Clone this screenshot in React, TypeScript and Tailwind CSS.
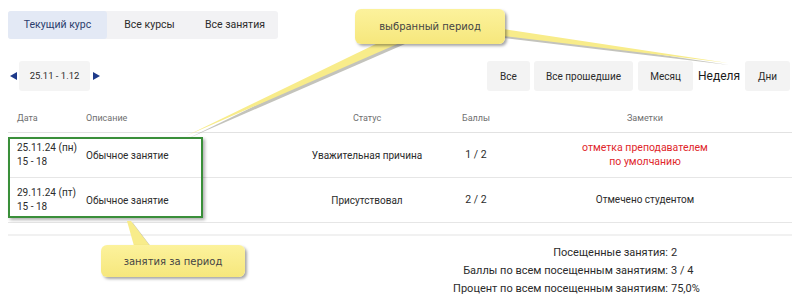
import React from 'react';

const rows = [
  {
    date: '25.11.24 (пн)',
    time: '15 - 18',
    desc: 'Обычное занятие',
    status: 'Уважительная причина',
    score: '1 / 2',
    note: ['отметка преподавателем', 'по умолчанию'],
    red: true,
  },
  {
    date: '29.11.24 (пт)',
    time: '15 - 18',
    desc: 'Обычное занятие',
    status: 'Присутствовал',
    score: '2 / 2',
    note: ['Отмечено студентом'],
    red: false,
  },
];

const summary = [
  ['Посещенные занятия:', '2'],
  ['Баллы по всем посещенным занятиям:', '3 / 4'],
  ['Процент по всем посещенным занятиям:', '75,0%'],
];

const App: React.FC = () => {
  return (
    <div className="relative w-[800px] h-[303px] overflow-hidden bg-white px-2 font-['Roboto',sans-serif] text-[#2b2b2b]">
      {/* Tabs */}
      <div className="pt-[11px]">
        <div className="inline-flex h-[28px] rounded-[3px] bg-[#f2f2f4] text-[10.5px]">
          <div className="w-[99px] flex items-center justify-center rounded-[3px] bg-[#e3e9f5] text-[#2b3d6c]">Текущий курс</div>
          <div className="w-[85px] flex items-center justify-center">Все курсы</div>
          <div className="w-[86px] flex items-center justify-center">Все занятия</div>
        </div>
      </div>

      {/* Period row */}
      <div className="mt-[22px] h-[30px] flex items-center justify-between">
        <div className="flex items-center pl-[2px]">
          <div className="w-0 h-0 border-y-[4px] border-y-transparent border-r-[7px] border-r-[#1e3a8a]" />
          <div className="ml-[2px] w-[71px] h-[30px] flex items-center justify-center rounded-[3px] bg-[#f4f4f4] text-[9.5px]">25.11 - 1.12</div>
          <div className="ml-[3px] w-0 h-0 border-y-[4px] border-y-transparent border-l-[7px] border-l-[#1e3a8a]" />
        </div>
        <div className="flex items-center text-[10px] pr-[2px]">
          <div className="w-[43px] h-[30px] flex items-center justify-center rounded-[3px] bg-[#f3f3f3]">Все</div>
          <div className="ml-[4px] w-[99px] h-[30px] flex items-center justify-center rounded-[3px] bg-[#f3f3f3]">Все прошедшие</div>
          <div className="ml-[5px] w-[55px] h-[30px] flex items-center justify-center rounded-[3px] bg-[#f3f3f3]">Месяц</div>
          <div className="w-[52px] h-[30px] flex items-center justify-center text-[12px] text-[#1a1a1a]">Неделя</div>
          <div className="w-[45px] h-[30px] flex items-center justify-center rounded-[3px] bg-[#f3f3f3]">Дни</div>
        </div>
      </div>

      {/* Table */}
      <div className="mt-[19px]">
        <div className="grid grid-cols-[78px_202px_158px_60px_1fr] border-b border-[#e2e2e2] pt-[3px] pb-[9px] text-[9px] leading-[10px] text-[#6f6f6f]">
          <div className="pl-[9px]">Дата</div>
          <div>Описание</div>
          <div className="text-center">Статус</div>
          <div className="text-center">Баллы</div>
          <div className="text-center pr-[8px]">Заметки</div>
        </div>
        {rows.map((r) => (
          <div key={r.date} className="grid grid-cols-[78px_202px_158px_60px_1fr] h-[45px] items-center border-b border-[#e6e6e6] text-[10px]">
            <div className="pl-[9px] leading-[14px]">
              <div>{r.date}</div>
              <div>{r.time}</div>
            </div>
            <div>{r.desc}</div>
            <div className="text-center">{r.status}</div>
            <div className="text-center text-[10.5px]">{r.score}</div>
            <div className={`text-center pr-[8px] leading-[14px] ${r.red ? 'text-[#e0262b] text-[10.5px]' : ''}`}>
              {r.note.map((n) => (
                <div key={n}>{n}</div>
              ))}
            </div>
          </div>
        ))}
        <div className="mt-[11px] h-[2px] bg-[#f1f1f1]" />
      </div>

      {/* Summary */}
      <div className="mt-[8px] grid grid-cols-[660px_1fr] text-[11px] leading-[18px]">
        {summary.map(([label, value]) => (
          <React.Fragment key={label}>
            <div className="text-right">{label}</div>
            <div className="pl-[3px]">{value}</div>
          </React.Fragment>
        ))}
      </div>

      {/* Annotation overlay */}
      <div className="absolute left-[8px] top-[137px] w-[195px] h-[81px] border-2 border-[#3a8f3a] shadow-[2px_2px_3px_rgba(0,0,0,0.3)]" />

      <svg className="absolute inset-0 pointer-events-none" width="800" height="303">
        <polygon points="382,44 405,44 189,138" fill="#7a7a6a" opacity="0.45" />
        <polygon points="380,42 402,42 186,136" fill="#f8ec8a" />
        <polygon points="504,31 504,38 729,65" fill="#7a7a6a" opacity="0.45" />
        <polygon points="503,29 503,36 728,63" fill="#f8ec8a" />
        <polygon points="129,223 133,223 152,248 136,248" fill="#7a7a6a" opacity="0.45" />
        <polygon points="127,221 131,221 150,246 134,246" fill="#f8ec8a" />
      </svg>

      <div className="absolute left-[355px] top-[9px] w-[150px] h-[35px] flex items-center justify-center rounded-[6px] bg-gradient-to-b from-[#fcf29c] to-[#f6e77c] shadow-[2px_2px_3px_rgba(0,0,0,0.35)] font-['DejaVu_Sans',sans-serif] text-[10px] text-[#444]">
        выбранный период
      </div>
      <div className="absolute left-[101px] top-[245px] w-[144px] h-[32px] flex items-center justify-center rounded-[6px] bg-gradient-to-b from-[#fcf29c] to-[#f6e77c] shadow-[2px_2px_3px_rgba(0,0,0,0.35)] font-['DejaVu_Sans',sans-serif] text-[10px] text-[#444]">
        занятия за период
      </div>
    </div>
  );
};

export default App;
